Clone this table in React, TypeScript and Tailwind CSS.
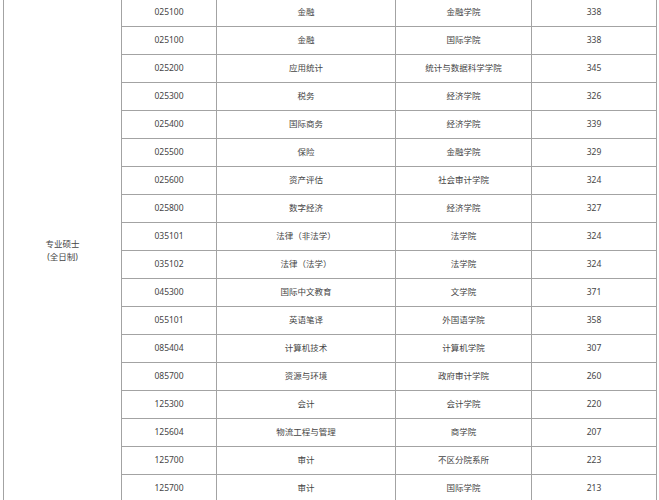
const rows: [string, string, string, string][] = [
  ["025100", "金融", "金融学院", "338"],
  ["025100", "金融", "国际学院", "338"],
  ["025200", "应用统计", "统计与数据科学学院", "345"],
  ["025300", "税务", "经济学院", "326"],
  ["025400", "国际商务", "经济学院", "339"],
  ["025500", "保险", "金融学院", "329"],
  ["025600", "资产评估", "社会审计学院", "324"],
  ["025800", "数字经济", "经济学院", "327"],
  ["035101", "法律（非法学）", "法学院", "324"],
  ["035102", "法律（法学）", "法学院", "324"],
  ["045300", "国际中文教育", "文学院", "371"],
  ["055101", "英语笔译", "外国语学院", "358"],
  ["085404", "计算机技术", "计算机学院", "307"],
  ["085700", "资源与环境", "政府审计学院", "260"],
  ["125300", "会计", "会计学院", "220"],
  ["125604", "物流工程与管理", "商学院", "207"],
  ["125700", "审计", "不区分院系所", "223"],
  ["125700", "审计", "国际学院", "213"],
];

const cell = "flex items-center justify-center border-r border-b border-[#a3a3a3] whitespace-nowrap";

export default function App() {
  return (
    <div
      className="h-[500px] w-[659px] overflow-hidden bg-white text-[8.5px] text-[#454545]"
      style={{ fontFamily: '"Noto Sans", "Noto Sans CJK SC", sans-serif' }}
    >
      <div className="-mt-px ml-[3px] grid w-[654px] grid-cols-[118px_95px_179px_136px_125px] auto-rows-[28px] border-l border-[#a3a3a3]">
        <div className={`${cell} row-span-18 flex-col leading-[12.5px]`}>
          <span>专业硕士</span>
          <span>(全日制)</span>
        </div>
        {rows.map(([code, name, college, score], i) => (
          <div key={i} className="contents">
            <div className={cell}>{code}</div>
            <div className={cell}>{name}</div>
            <div className={cell}>{college}</div>
            <div className={cell}>{score}</div>
          </div>
        ))}
      </div>
    </div>
  );
}
